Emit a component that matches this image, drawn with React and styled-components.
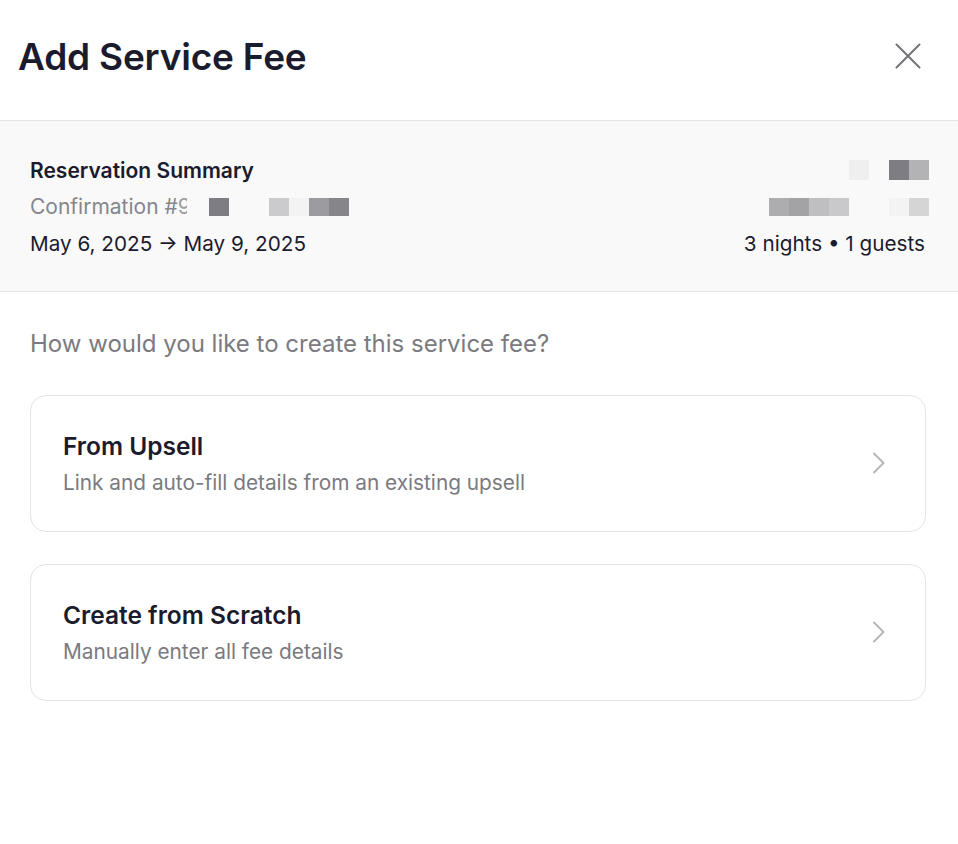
import React from 'react';
import styled, { createGlobalStyle } from 'styled-components';

const GlobalStyle = createGlobalStyle`
  html, body {
    margin: 0;
    padding: 0;
    background: #ffffff;
    font-family: Inter, "Noto Sans", sans-serif;
    color: #1b1b2e;
  }
  * { box-sizing: border-box; }
`;

const Modal = styled.div`
  width: 958px;
  min-height: 844px;
  background: #fff;
`;

const Header = styled.header`
  height: 121px;
  display: flex;
  align-items: center;
  justify-content: space-between;
  padding: 0 30px 8px 18px;
  border-bottom: 1px solid #e4e4e6;
`;

const Title = styled.h1`
  margin: 0;
  font-size: 37px;
  font-weight: 600;
  letter-spacing: -0.2px;
  color: #1b1b2e;
`;

const CloseButton = styled.button`
  background: transparent;
  border: none;
  padding: 0;
  width: 40px;
  height: 40px;
  display: flex;
  align-items: center;
  justify-content: center;
  cursor: pointer;
  color: #737378;
`;

const Summary = styled.section`
  background: #f9f9f9;
  border-bottom: 1px solid #e4e4e6;
  padding: 31px 33px 29px 30px;
  display: flex;
  flex-direction: column;
`;

const SummaryRow = styled.div`
  display: flex;
  align-items: center;
  justify-content: space-between;
  height: 36.5px;
`;

const SummaryTitle = styled.div`
  font-size: 21px;
  font-weight: 600;
  color: #1b1b2e;
`;

const Muted = styled.div`
  font-size: 21px;
  color: #86868b;
  display: flex;
  align-items: center;
`;

const Plain = styled.div`
  font-size: 20.7px;
  color: #1b1b2e;
`;

const Clip = styled.span`
  display: inline-block;
  width: 9px;
  overflow: hidden;
  white-space: nowrap;
  opacity: 0.8;
`;

const Redacted = styled.div`
  display: flex;
  align-items: center;
  margin-left: ${p => p.$offset || 0}px;
  margin-right: -4px;
`;

const Pixel = styled.span`
  display: inline-block;
  width: 20px;
  height: ${p => p.$h || 20}px;
  background: ${p => p.$c};
`;

const Body = styled.main`
  padding: 37px 32px 0 30px;
`;

const Question = styled.p`
  margin: 0 0 37px;
  font-size: 24px;
  color: #7a7a80;
`;

const OptionList = styled.div`
  display: flex;
  flex-direction: column;
  gap: 32px;
`;

const OptionCard = styled.button`
  width: 100%;
  height: 137px;
  border: 1px solid #e4e4e6;
  border-radius: 16px;
  background: #fff;
  display: flex;
  align-items: center;
  justify-content: space-between;
  padding: 0 38px 0 32px;
  text-align: left;
  font-family: inherit;
  cursor: pointer;
`;

const OptionText = styled.div`
  display: flex;
  flex-direction: column;
  gap: 9px;
  margin-top: -1px;
`;

const OptionTitle = styled.div`
  font-size: 24.5px;
  font-weight: 600;
  color: #1b1b2e;
`;

const OptionDesc = styled.div`
  font-size: 20.8px;
  color: #7a7a80;
`;

const XIcon = () => (
  <svg width="26" height="26" viewBox="0 0 26 26" fill="none" stroke="currentColor" strokeWidth="2" strokeLinecap="round">
    <path d="M1.5 1.5 24.5 24.5M24.5 1.5 1.5 24.5" />
  </svg>
);

const Chevron = () => (
  <svg width="16" height="24" viewBox="0 0 16 24" fill="none" stroke="#b4b4b8" strokeWidth="1.8" strokeLinecap="round" strokeLinejoin="round">
    <path d="M3 2.5 12.5 12 3 21.5" />
  </svg>
);

const pixels = (list, h) => list.map((c, i) => <Pixel key={i} $c={c} $h={h} />);

export default function App() {
  return (
    <Modal>
      <GlobalStyle />
      <Header>
        <Title>Add Service Fee</Title>
        <CloseButton aria-label="Close"><XIcon /></CloseButton>
      </Header>

      <Summary>
        <SummaryRow>
          <SummaryTitle>Reservation Summary</SummaryTitle>
          <Redacted>
            {pixels(['#efefef', '#f9f9f9', '#7e7d83', '#b3b3b5'])}
          </Redacted>
        </SummaryRow>
        <SummaryRow>
          <Muted>
            Confirmation #<Clip>9</Clip>
            <Redacted $offset={22}>
              {pixels(['#7e7d83', '#f9f9f9', '#f9f9f9', '#cbcbcd', '#f3f3f3', '#9c9b9f', '#868589'], 18)}
            </Redacted>
          </Muted>
          <Redacted>
            {pixels(['#adadaf', '#a3a2a5', '#bfbfc1', '#c9c9cb', '#f9f9f9', '#f9f9f9', '#f3f3f3', '#d5d5d6'], 18)}
          </Redacted>
        </SummaryRow>
        <SummaryRow>
          <Plain>May 6, 2025 → May 9, 2025</Plain>
          <Plain>3 nights • 1 guests</Plain>
        </SummaryRow>
      </Summary>

      <Body>
        <Question>How would you like to create this service fee?</Question>
        <OptionList>
          <OptionCard>
            <OptionText>
              <OptionTitle>From Upsell</OptionTitle>
              <OptionDesc>Link and auto-fill details from an existing upsell</OptionDesc>
            </OptionText>
            <Chevron />
          </OptionCard>
          <OptionCard>
            <OptionText>
              <OptionTitle>Create from Scratch</OptionTitle>
              <OptionDesc>Manually enter all fee details</OptionDesc>
            </OptionText>
            <Chevron />
          </OptionCard>
        </OptionList>
      </Body>
    </Modal>
  );
}
